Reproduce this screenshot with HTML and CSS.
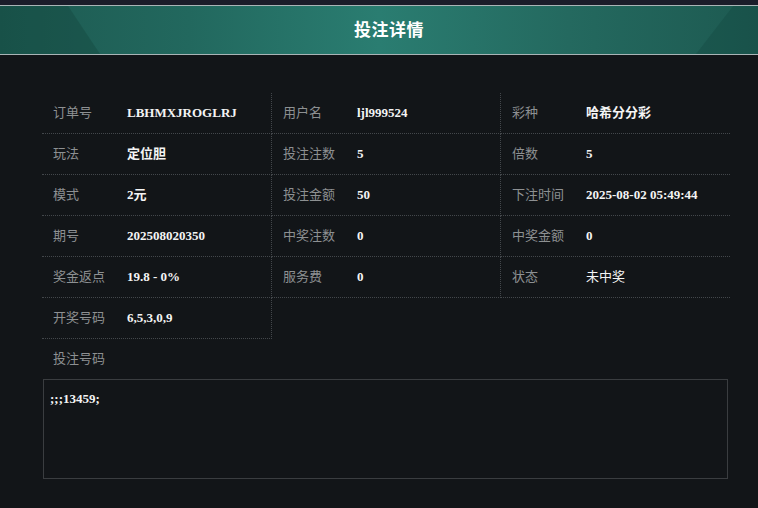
FILE: index.html
```html
<!DOCTYPE html>
<html lang="zh-CN">
<head>
<meta charset="utf-8">
<title>投注详情</title>
<link rel="stylesheet" href="styles.css">
</head>
<body>
<div class="topband"></div>
<header class="header">
  <h1 class="title">投注详情</h1>
</header>
<main class="content">
  <div class="grid">
    <div class="cell"><span class="label">订单号</span><span class="value">LBHMXJROGLRJ</span></div>
    <div class="cell"><span class="label">用户名</span><span class="value">ljl999524</span></div>
    <div class="cell last"><span class="label">彩种</span><span class="value">哈希分分彩</span></div>

    <div class="cell"><span class="label">玩法</span><span class="value">定位胆</span></div>
    <div class="cell"><span class="label">投注注数</span><span class="value">5</span></div>
    <div class="cell last"><span class="label">倍数</span><span class="value">5</span></div>

    <div class="cell"><span class="label">模式</span><span class="value">2元</span></div>
    <div class="cell"><span class="label">投注金额</span><span class="value">50</span></div>
    <div class="cell last"><span class="label">下注时间</span><span class="value">2025-08-02 05:49:44</span></div>

    <div class="cell"><span class="label">期号</span><span class="value">202508020350</span></div>
    <div class="cell"><span class="label">中奖注数</span><span class="value">0</span></div>
    <div class="cell last"><span class="label">中奖金额</span><span class="value">0</span></div>

    <div class="cell"><span class="label">奖金返点</span><span class="value">19.8 - 0%</span></div>
    <div class="cell"><span class="label">服务费</span><span class="value">0</span></div>
    <div class="cell last"><span class="label">状态</span><span class="value plain">未中奖</span></div>

    <div class="cell"><span class="label">开奖号码</span><span class="value">6,5,3,0,9</span></div>
  </div>
  <div class="codes-label">投注号码</div>
  <div class="codes-box">;;;13459;</div>
</main>
</body>
</html>
```

FILE: styles.css
```css
html, body {
  margin: 0;
  padding: 0;
  background: #121518;
  width: 758px;
  height: 508px;
  overflow: hidden;
}

body {
  font-family: "Noto Sans CJK SC", "Noto Sans", sans-serif;
}

.topband {
  height: 5px;
  background: #1b1d2a;
}

.header {
  position: relative;
  height: 48px;
  border-top: 1px solid #a9b4b6;
  border-bottom: 1px solid #a9b4b6;
  background: linear-gradient(90deg, #1d5a51 0%, #22685e 25%, #2a7d71 50%, #24695f 75%, #1d5a51 100%);
  display: flex;
  align-items: center;
  justify-content: center;
  overflow: hidden;
}

.header::before {
  content: "";
  position: absolute;
  left: 0;
  top: 0;
  width: 100px;
  height: 100%;
  background: rgba(18, 66, 58, 0.35);
  clip-path: polygon(0 0, 68% 0, 100% 100%, 0 100%);
}

.header::after {
  content: "";
  position: absolute;
  right: 0;
  top: 0;
  width: 62px;
  height: 100%;
  background: rgba(18, 66, 58, 0.3);
  clip-path: polygon(60% 0, 100% 0, 100% 100%, 0 100%);
}

.title {
  position: relative;
  z-index: 1;
  margin: 0 0 3px 20px;
  font-size: 17px;
  line-height: 1;
  font-weight: bold;
  color: #ffffff;
  letter-spacing: 0.5px;
}

.content {
  padding: 38px 0 0 42px;
}

.grid {
  display: grid;
  grid-template-columns: 230px 229px 229px;
  grid-auto-rows: 41px;
}

.cell {
  display: flex;
  align-items: baseline;
  padding: 11px 0 0 11px;
  border-bottom: 1px dotted #43474b;
  border-right: 1px dotted #43474b;
  box-sizing: border-box;
}

.cell.last {
  border-right: none;
}

.label {
  width: 74px;
  flex: none;
  font-size: 13px;
  line-height: 16px;
  color: #8d9092;
}

.value {
  font-family: "Liberation Serif", "Noto Sans CJK SC", serif;
  font-weight: bold;
  font-size: 13px;
  line-height: 16px;
  color: #f4f4f4;
}

.value.plain {
  font-family: "Noto Sans CJK SC", sans-serif;
  font-weight: normal;
}

.codes-label {
  height: 40px;
  box-sizing: border-box;
  padding: 11px 0 0 11px;
  font-size: 13px;
  line-height: 16px;
  color: #8d9092;
}

.codes-box {
  margin-left: 1px;
  width: 685px;
  height: 100px;
  box-sizing: border-box;
  border: 1px solid #3a3d40;
  padding: 11px 6px;
  font-family: "Liberation Serif", serif;
  font-weight: bold;
  font-size: 13px;
  color: #f4f4f4;
}
```
